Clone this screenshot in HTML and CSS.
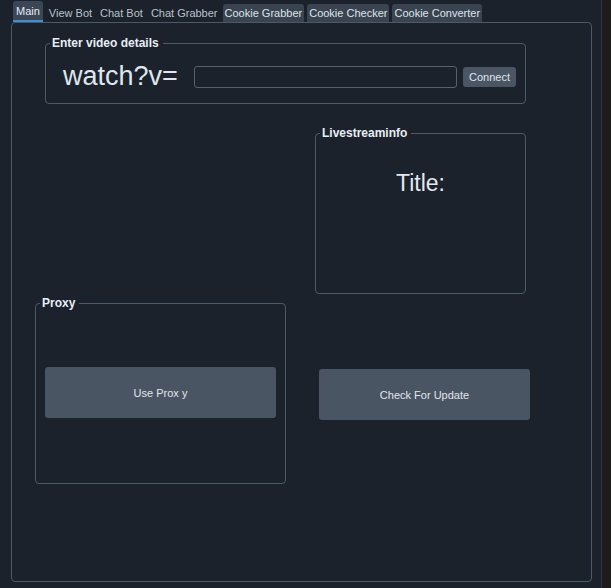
FILE: index.html
```html
<!DOCTYPE html>
<html lang="en">
<head>
    <meta charset="UTF-8">
    <meta name="viewport" content="width=device-width, initial-scale=1.0">
    <title>Stream Tool</title>
    <link rel="stylesheet" href="styles.css">
</head>
<body>
    <div class="window">
        <div class="app">
            <div class="tabs">
                <div class="tab active">Main</div>
                <div class="tab plain">View Bot</div>
                <div class="tab plain">Chat Bot</div>
                <div class="tab plain">Chat Grabber</div>
                <div class="tab boxed">Cookie Grabber</div>
                <div class="tab boxed">Cookie Checker</div>
                <div class="tab boxed">Cookie Converter</div>
            </div>

            <div class="pane">
                <fieldset class="group video-group">
                    <legend>Enter video details</legend>
                    <div class="video-row">
                        <span class="watch-label">watch?v=</span>
                        <input type="text" class="video-input">
                        <button class="connect-button">Connect</button>
                    </div>
                </fieldset>

                <div class="lower">
                    <div class="left-col">
                        <fieldset class="group proxy-group">
                            <legend>Proxy</legend>
                            <button class="big-button proxy-button">Use Prox y</button>
                        </fieldset>
                    </div>
                    <div class="right-col">
                        <fieldset class="group info-group">
                            <legend>Livestreaminfo</legend>
                            <div class="title-label">Title:</div>
                        </fieldset>
                        <button class="big-button update-button">Check For Update</button>
                    </div>
                </div>
            </div>
        </div>
        <div class="edge"></div>
    </div>
</body>
</html>
```

FILE: styles.css
```css
body {
    margin: 0;
    font-family: "Liberation Sans", Arial, sans-serif;
    font-size: 11px;
    background-color: #1b222b;
    color: #e2e8ee;
}

.window {
    display: flex;
    width: 611px;
    height: 588px;
    overflow: hidden;
}

.app {
    flex: 1;
    background-color: #1b222b;
}

.edge {
    width: 9px;
    border-left: 1px solid #30363b;
    background-color: #1d1c1b;
}

/* tab bar */
.tabs {
    display: flex;
    align-items: flex-end;
    height: 22px;
    padding-left: 13px;
}

.tab {
    padding: 0 3px;
    line-height: 18px;
    white-space: nowrap;
}

.tab.active {
    height: 21px;
    line-height: 20px;
    box-sizing: border-box;
    background-color: #3b4656;
    border-bottom: 2px solid #3d8fd8;
    border-radius: 3px 3px 0 0;
    color: #e6ecf2;
    margin-right: 2px;
}

.tab.plain {
    color: #b9c2cb;
    padding: 0 4px;
}

.tab.boxed {
    background-color: #3a4350;
    border-radius: 3px 3px 0 0;
    color: #dde3e9;
    margin-left: 3px;
    padding: 0 2px;
}

.tab.plain + .tab.boxed {
    margin-left: 1px;
}

/* main pane */
.pane {
    box-sizing: border-box;
    width: 581px;
    height: 560px;
    margin-left: 11px;
    border: 1px solid #4a5a67;
    border-radius: 4px;
    background-color: #1b222c;
}

.group {
    margin: 0;
    padding: 0;
    min-width: 0;
    box-sizing: border-box;
    border: 1px solid #4b5a68;
    border-radius: 4px;
}

.group legend {
    font-weight: bold;
    font-size: 12px;
    line-height: 14px;
    color: #e8eef4;
    padding: 0 4px 0 2px;
    margin-left: 4px;
}

.video-group {
    margin: 13px 0 0 33px;
    width: 481px;
    height: 68px;
}

.video-row {
    display: flex;
    align-items: center;
    height: 53px;
    padding-left: 17px;
}

.watch-label {
    font-size: 27px;
    color: #dfe6ec;
    width: 131px;
}

.video-input {
    box-sizing: border-box;
    width: 263px;
    height: 22px;
    margin: 0;
    background-color: #1b222c;
    border: 1px solid #56616e;
    border-radius: 3px;
}

.connect-button {
    margin-left: 6px;
    width: 53px;
    height: 20px;
    padding: 0;
    border: none;
    border-radius: 3px;
    background-color: #4b5665;
    color: #dfe5eb;
    font-family: "Liberation Sans", Arial, sans-serif;
    font-size: 11px;
}

.lower {
    display: flex;
    margin-top: 22px;
}

.left-col {
    margin: 170px 0 0 23px;
}

.right-col {
    margin-left: 29px;
}

.proxy-group {
    width: 251px;
    height: 188px;
}

.info-group {
    width: 211px;
    height: 168px;
}

.title-label {
    text-align: center;
    font-size: 23px;
    margin-top: 30px;
    color: #e2e8ee;
}

.big-button {
    display: block;
    height: 51px;
    padding: 0;
    border: none;
    border-radius: 3px;
    background-color: #4a5563;
    color: #e0e6ec;
    font-family: "Liberation Sans", Arial, sans-serif;
    font-size: 11px;
}

.proxy-button {
    width: 231px;
    margin: 57px 0 0 9px;
}

.update-button {
    width: 211px;
    margin: 75px 0 0 4px;
}
```
